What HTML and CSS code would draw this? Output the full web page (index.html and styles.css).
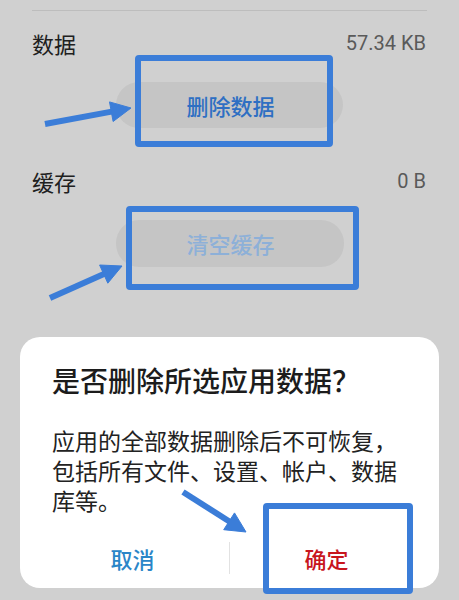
FILE: index.html
```html
<!DOCTYPE html>
<html lang="zh-CN">
<head>
<meta charset="utf-8">
<link rel="stylesheet" href="styles.css">
</head>
<body>
<div class="page">
  <div class="divider"></div>
  <div class="row">
    <span class="label">数据</span>
    <span class="value">57.34 KB</span>
  </div>
  <div class="btnwrap first">
    <div class="pill">删除数据</div>
  </div>
  <div class="row second">
    <span class="label">缓存</span>
    <span class="value">0 B</span>
  </div>
  <div class="btnwrap">
    <div class="pill pill-disabled">清空缓存</div>
  </div>

  <div class="dialog">
    <div class="dlg-title">是否删除所选应用数据？</div>
    <div class="dlg-body">
      <div class="dlg-line">应用的全部数据删除后不可恢复，</div>
      <div class="dlg-line">包括所有文件、设置、帐户、数据</div>
      <div class="dlg-line">库等。</div>
    </div>
    <div class="dlg-actions">
      <div class="act act-cancel">取消</div>
      <div class="act-sep"></div>
      <div class="act act-ok">确定</div>
    </div>
  </div>
</div>

<div class="mark mark-1"></div>
<div class="mark mark-2"></div>
<div class="mark mark-3"></div>
<svg class="arrows" width="459" height="600" viewBox="0 0 459 600">
  <g fill="#3b7dd8" stroke="#3b7dd8">
    <line x1="45" y1="124" x2="113" y2="111.4" stroke-width="6"/>
    <polygon points="131,108 113.1,121.5 109.5,101.9" stroke-width="1" stroke-linejoin="round"/>
    <line x1="50" y1="298" x2="105" y2="273.5" stroke-width="6"/>
    <polygon points="122,266 107.8,283.2 99.6,265" stroke-width="1" stroke-linejoin="round"/>
    <line x1="183" y1="492" x2="231" y2="522.5" stroke-width="6"/>
    <polygon points="246,532 223.7,529.7 234.5,512.9" stroke-width="1" stroke-linejoin="round"/>
  </g>
</svg>
</body>
</html>
```
FILE: styles.css
```css
html, body {
  margin: 0;
  padding: 0;
}
body {
  width: 459px;
  height: 600px;
  overflow: hidden;
  background: #d0d0d0;
  font-family: "Noto Sans CJK SC", "Noto Sans", sans-serif;
}
.page {
  display: flex;
  flex-direction: column;
  height: 600px;
}
.divider {
  margin: 10px 32px 0;
  height: 1px;
  background: #bdbdbd;
}
.row {
  margin: 17px 32px 0;
  height: 30px;
  display: flex;
  justify-content: space-between;
  align-items: center;
}
.row.second {
  margin-top: 38px;
}
.label {
  font-size: 22px;
  line-height: 30px;
  color: #202020;
}
.value {
  font-family: Roboto, "Noto Sans", sans-serif;
  font-size: 20px;
  color: #5a5a5a;
  padding-right: 1px;
}
.btnwrap {
  margin-top: 24px;
  display: flex;
  justify-content: center;
}
.pill {
  width: 227px;
  height: 46px;
  border-radius: 23px;
  background: #c5c5c5;
  color: #2e6fc3;
  font-size: 22px;
  font-weight: 500;
  line-height: 46px;
  text-align: center;
  padding-left: 2px;
  box-sizing: border-box;
}
.pill-disabled {
  color: #8db0d8;
  width: 228px;
  height: 47px;
  line-height: 47px;
}
.dialog {
  margin: 70px 20px 0;
  background: #ffffff;
  border-radius: 20px;
  padding: 25px 16px 2px;
  box-sizing: border-box;
}
.dlg-title {
  padding: 0 16px;
  font-size: 28px;
  line-height: 36px;
  font-weight: 500;
  color: #1c1c1c;
}
.dlg-body {
  margin-top: 27px;
  padding: 0 16px;
  font-size: 23px;
  color: #222222;
  display: flex;
  flex-direction: column;
}
.dlg-line {
  height: 30px;
  line-height: 30px;
  white-space: nowrap;
}
.dlg-actions {
  margin-top: 15px;
  height: 56px;
  display: flex;
  align-items: center;
}
.act {
  flex: 1;
  text-align: center;
  font-size: 22px;
  font-weight: 500;
}
.act-cancel {
  color: #2a86c8;
}
.act-ok {
  color: #c8161d;
}
.act-sep {
  width: 1px;
  height: 32px;
  background: #e2e2e2;
}
.mark {
  position: absolute;
  border: 6px solid #3b7dd8;
  border-radius: 4px;
  box-sizing: border-box;
}
.mark-1 {
  left: 135px;
  top: 55px;
  width: 198px;
  height: 92px;
}
.mark-2 {
  left: 126px;
  top: 206px;
  width: 233px;
  height: 84px;
}
.mark-3 {
  left: 263px;
  top: 503px;
  width: 150px;
  height: 91px;
}
.arrows {
  position: absolute;
  left: 0;
  top: 0;
  pointer-events: none;
}
```
